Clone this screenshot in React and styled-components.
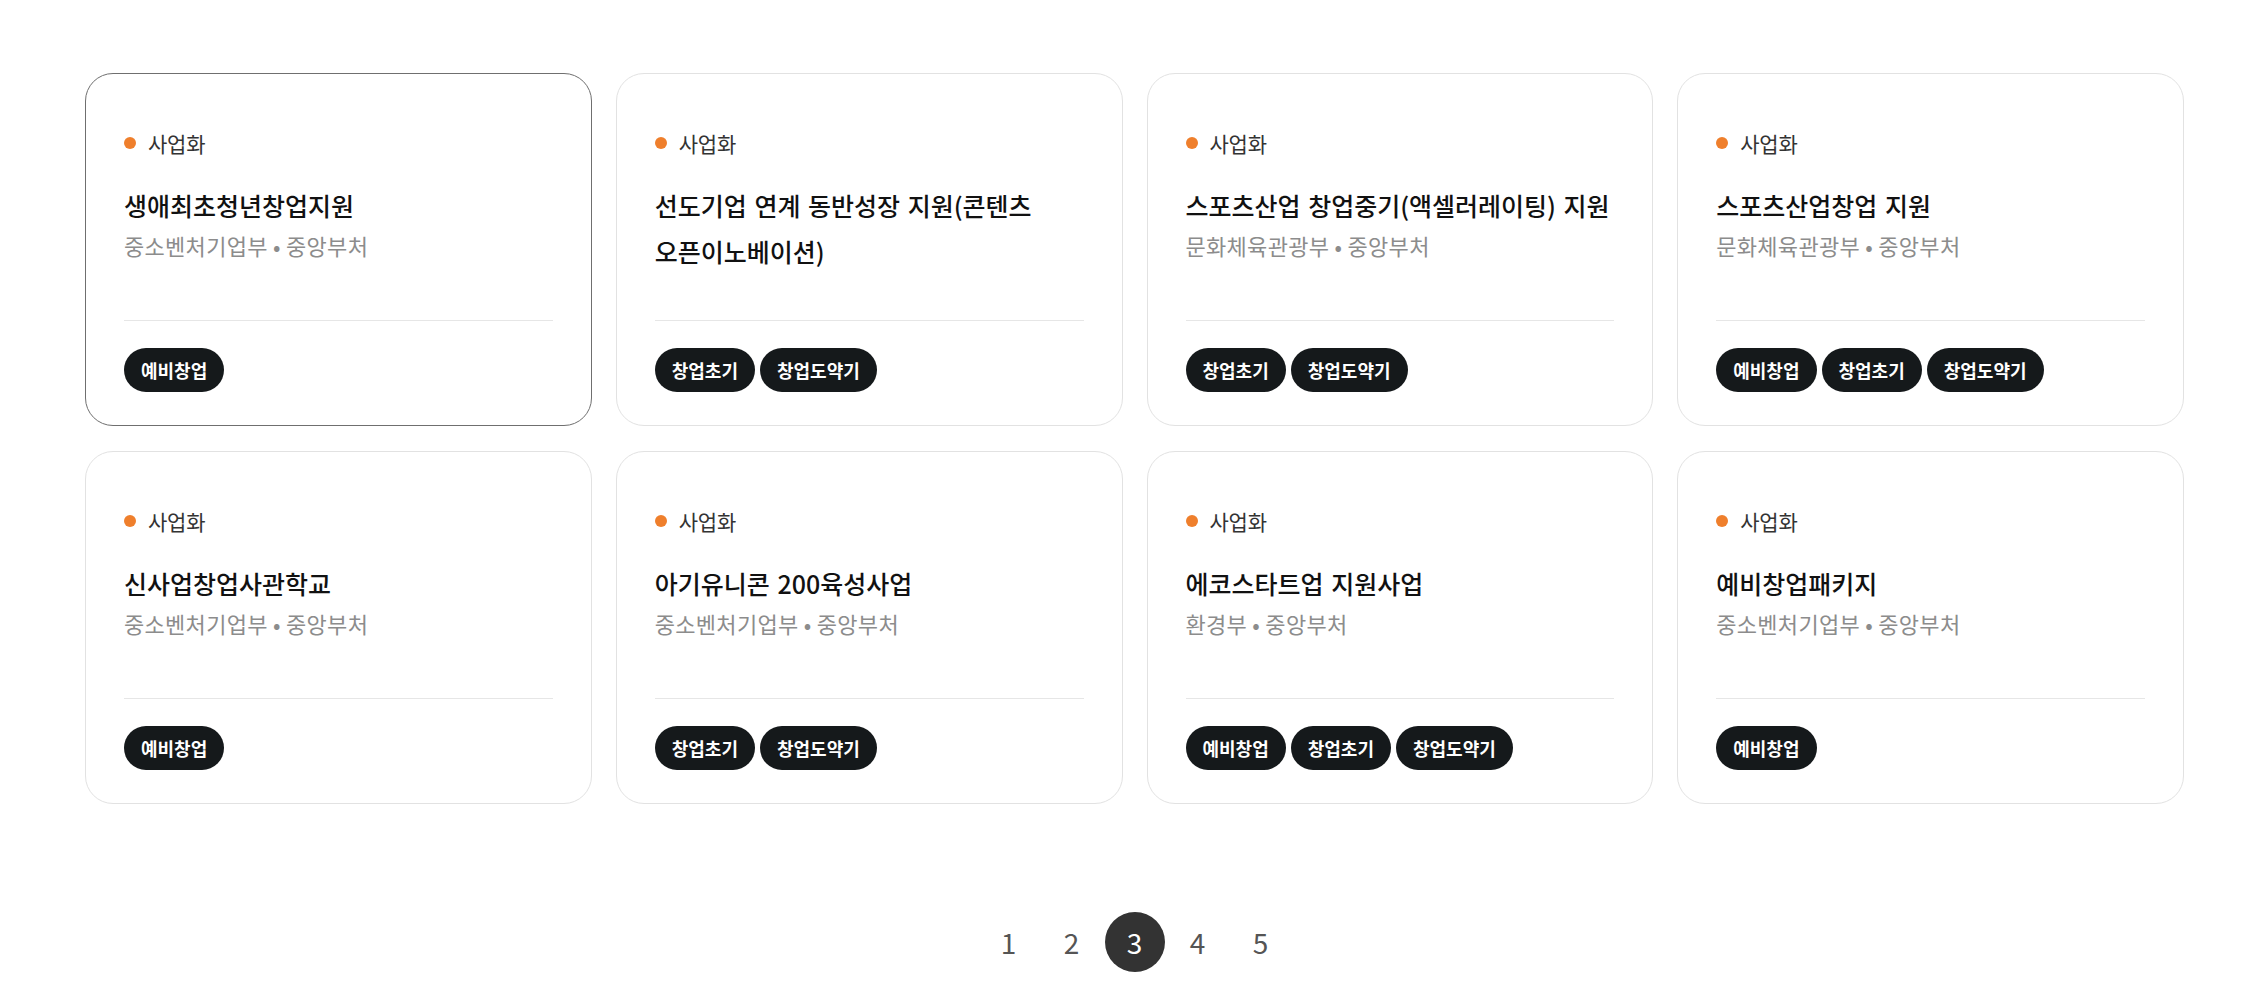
import React from "react";
import styled, { createGlobalStyle } from "styled-components";

const GlobalStyle = createGlobalStyle`
  body {
    margin: 0;
    background: #ffffff;
    font-family: "Noto Sans CJK KR", "Noto Sans", sans-serif;
  }
`;

const Page = styled.div`
  width: 2099px;
  margin-left: 85px;
  padding-top: 73px;
`;

const Grid = styled.div`
  display: grid;
  grid-template-columns: repeat(4, 1fr);
  gap: 25px 24px;
`;

const Card = styled.div`
  display: flex;
  flex-direction: column;
  border: 1px solid ${(props) => (props.active ? "#6f6f6f" : "#e2e2e2")};
  border-radius: 28px;
  background: #fff;
  padding: 53px 38px 33px 38px;
`;

const Body = styled.div`
  min-height: 193px;
`;

const Category = styled.div`
  display: flex;
  align-items: center;
  gap: 12px;
  font-size: 21px;
  line-height: 32px;
  color: #333;
  letter-spacing: -0.01em;
  span {
    width: 12px;
    height: 12px;
    border-radius: 50%;
    background: #ef7f2c;
  }
`;

const Title = styled.h3`
  margin: 23px 0 0;
  font-size: 25px;
  font-weight: 500;
  line-height: 46px;
  color: #111;
  letter-spacing: 0;
  word-spacing: 2px;
  word-break: keep-all;
`;

const Sub = styled.p`
  margin: 0;
  font-size: 22px;
  line-height: 34px;
  color: #8c8c8c;
  letter-spacing: 0.3px;
`;

const Divider = styled.hr`
  border: 0;
  border-top: 1px solid #e6e6e6;
  margin: 0 0 27px;
`;

const Tags = styled.div`
  display: flex;
  gap: 5px;
`;

const Tag = styled.span`
  display: inline-flex;
  align-items: center;
  height: 44px;
  padding: 0 17px;
  border-radius: 22px;
  background: #15191b;
  color: #fff;
  font-size: 18px;
  font-weight: 700;
  letter-spacing: 0;
`;

const Pagination = styled.nav`
  display: flex;
  justify-content: center;
  gap: 3px;
  margin-top: 108px;
`;

const PageButton = styled.button`
  width: 60px;
  height: 60px;
  border: 0;
  border-radius: 50%;
  background: ${(props) => (props.active ? "#333333" : "transparent")};
  color: ${(props) => (props.active ? "#fff" : "#555")};
  font-family: "Noto Sans CJK KR", "Noto Sans", sans-serif;
  font-size: 28px;
  line-height: 1;
  padding: 0;
  cursor: pointer;
`;

const cards = [
  {
    title: "생애최초청년창업지원",
    sub: "중소벤처기업부 • 중앙부처",
    tags: ["예비창업"],
    active: true,
  },
  {
    title: "선도기업 연계 동반성장 지원(콘텐츠 오픈이노베이션)",
    tags: ["창업초기", "창업도약기"],
  },
  {
    title: "스포츠산업 창업중기(액셀러레이팅) 지원",
    sub: "문화체육관광부 • 중앙부처",
    tags: ["창업초기", "창업도약기"],
  },
  {
    title: "스포츠산업창업 지원",
    sub: "문화체육관광부 • 중앙부처",
    tags: ["예비창업", "창업초기", "창업도약기"],
  },
  {
    title: "신사업창업사관학교",
    sub: "중소벤처기업부 • 중앙부처",
    tags: ["예비창업"],
  },
  {
    title: "아기유니콘 200육성사업",
    sub: "중소벤처기업부 • 중앙부처",
    tags: ["창업초기", "창업도약기"],
  },
  {
    title: "에코스타트업 지원사업",
    sub: "환경부 • 중앙부처",
    tags: ["예비창업", "창업초기", "창업도약기"],
  },
  {
    title: "예비창업패키지",
    sub: "중소벤처기업부 • 중앙부처",
    tags: ["예비창업"],
  },
];

const App = () => {
  return (
    <Page>
      <GlobalStyle />
      <Grid>
        {cards.map((card) => (
          <Card key={card.title} active={card.active}>
            <Body>
              <Category>
                <span />
                사업화
              </Category>
              <Title>{card.title}</Title>
              {card.sub && <Sub>{card.sub}</Sub>}
            </Body>
            <Divider />
            <Tags>
              {card.tags.map((tag) => (
                <Tag key={tag}>{tag}</Tag>
              ))}
            </Tags>
          </Card>
        ))}
      </Grid>
      <Pagination>
        {[1, 2, 3, 4, 5].map((n) => (
          <PageButton key={n} active={n === 3}>
            {n}
          </PageButton>
        ))}
      </Pagination>
    </Page>
  );
};

export default App;
